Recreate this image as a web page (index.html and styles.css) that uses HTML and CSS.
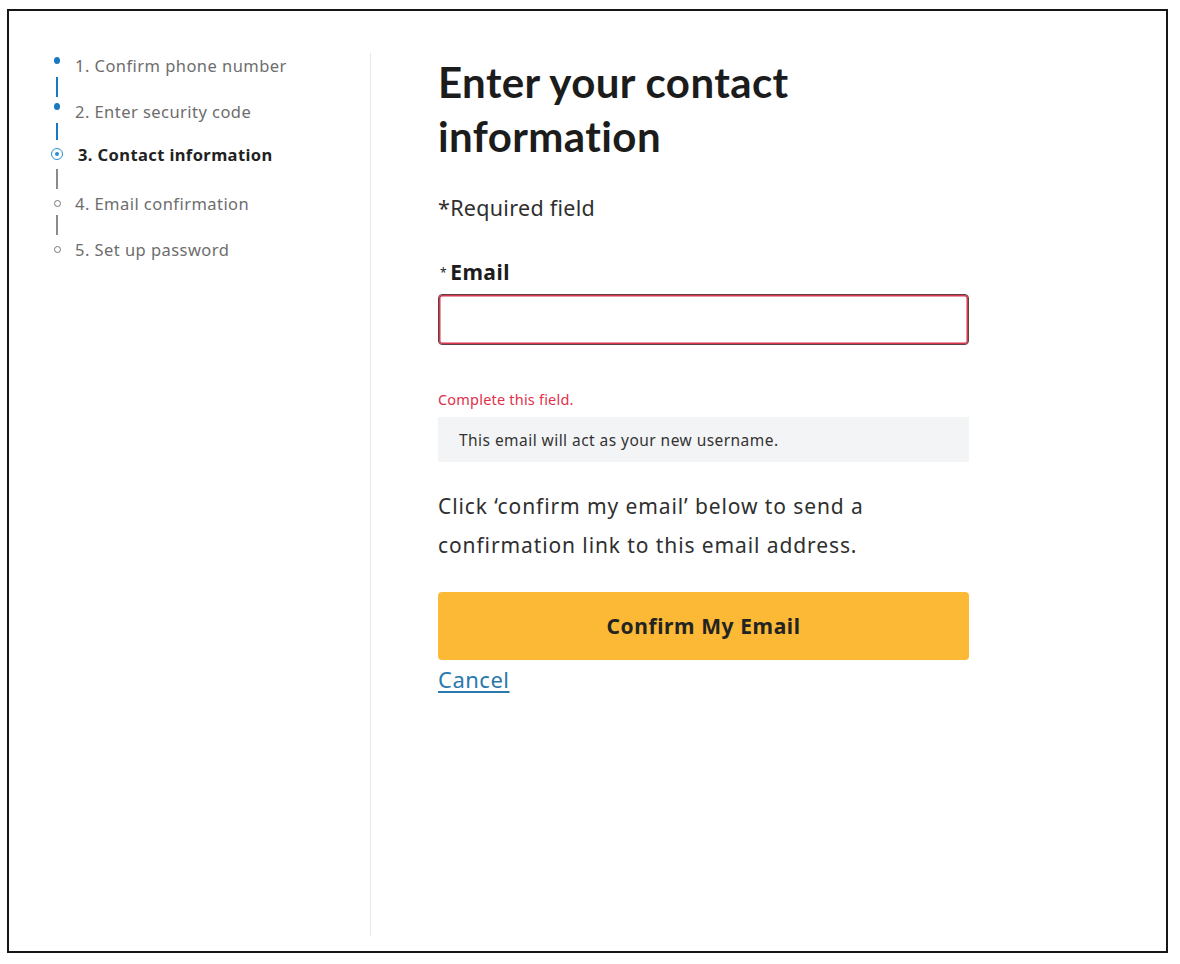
FILE: index.html
```html
<!DOCTYPE html>
<html lang="en">
<head>
<meta charset="utf-8">
<title>Enter your contact information</title>
<link rel="stylesheet" href="styles.css">
</head>
<body>
<div class="frame">
  <aside class="sidebar">
    <div class="steps">
      <div class="step done"><span class="marker"><span class="dot"></span></span><span class="label">1. Confirm phone number</span></div>
      <div class="conn done"><span class="line"></span></div>
      <div class="step done"><span class="marker"><span class="dot"></span></span><span class="label">2. Enter security code</span></div>
      <div class="conn done short"><span class="line"></span></div>
      <div class="step current"><span class="marker"><span class="ring"></span></span><span class="label">3. Contact information</span></div>
      <div class="conn long"><span class="line"></span></div>
      <div class="step todo"><span class="marker"><span class="hollow"></span></span><span class="label">4. Email confirmation</span></div>
      <div class="conn"><span class="line"></span></div>
      <div class="step todo"><span class="marker"><span class="hollow"></span></span><span class="label">5. Set up password</span></div>
    </div>
  </aside>
  <main class="content">
    <h1 class="title">Enter your contact information</h1>
    <p class="required-note">*Required field</p>
    <label class="field-label" for="email"><span class="ast">*</span>Email</label>
    <input class="field-input" id="email" type="email">
    <p class="error">Complete this field.</p>
    <div class="hint">This email will act as your new username.</div>
    <p class="instructions">Click ‘confirm my email’ below to send a confirmation link to this email address.</p>
    <button class="primary-btn" type="button">Confirm My Email</button>
    <a class="cancel" href="#">Cancel</a>
  </main>
</div>
</body>
</html>
```
FILE: styles.css
```css
* { box-sizing: border-box; }
html, body { margin: 0; padding: 0; background: #fff; }
body {
  padding: 9px 12px 11px 7px;
  font-family: "Noto Sans", Lato, sans-serif;
  color: #2b2b2b;
}
.frame {
  display: flex;
  height: 944px;
  border: 2px solid #161616;
  background: #fff;
}
.sidebar {
  width: 362px;
  margin: 42px 0 15px 0;
  border-right: 1px solid #e7e7e7;
}
.steps {
  display: flex;
  flex-direction: column;
  padding: 1px 0 0 42px;
}
.step {
  display: flex;
  align-items: center;
  height: 22px;
  font-size: 16.5px;
  letter-spacing: 0.45px;
  color: #6d6d6d;
}
.marker {
  width: 12px;
  height: 22px;
  display: flex;
  align-items: center;
  justify-content: center;
  margin-right: 12px;
  flex: 0 0 auto;
}
.step.done .marker { align-items: flex-start; padding-top: 3px; }
.dot {
  width: 6px; height: 7px;
  border-radius: 50%;
  background: #1a78bf;
}
.ring {
  width: 12px; height: 12px;
  border-radius: 50%;
  border: 1.5px solid #2b8fd3;
  display: flex; align-items: center; justify-content: center;
}
.ring::after {
  content: "";
  width: 4px; height: 4px; border-radius: 50%;
  background: #2b8fd3;
}
.hollow {
  width: 7px; height: 7px;
  border-radius: 50%;
  border: 1.3px solid #777;
}
.step.current .label { font-weight: 700; color: #222; margin-left: 3px; letter-spacing: 0.4px; }
.conn {
  height: 24px;
  width: 12px;
  display: flex;
  justify-content: center;
  padding: 1px 0 3px;
}
.conn.short { height: 21px; }
.conn.long { height: 27px; padding-top: 4px; }
.conn .line { width: 1.5px; background: #8a8a8a; }
.conn.done .line { background: #1a78bf; }
.content {
  flex: 0 0 auto;
  width: 598px;
  padding: 44px 0 0 67px;
  display: flex;
  flex-direction: column;
  align-items: flex-start;
}
.title {
  margin: 0;
  font-family: Lato, sans-serif;
  font-weight: 700;
  font-size: 42px;
  letter-spacing: 0.4px;
  line-height: 54px;
  color: #1c1c1c;
  width: 420px;
}
.required-note {
  margin: 30px 0 0;
  font-size: 21.5px;
  letter-spacing: 0.3px;
  line-height: 30px;
  color: #2f2f2f;
}
.field-label {
  margin-top: 36px;
  font-size: 21px;
  letter-spacing: 0.5px;
  line-height: 26px;
  font-weight: 700;
  color: #1c1c1c;
  display: flex;
  align-items: baseline;
}
.ast { font-size: 12px; font-weight: 400; margin: 0 3px 0 2px; position: relative; top: -3px; }
.field-input {
  margin-top: 5px;
  width: 531px;
  height: 51px;
  border: 1px solid #5b4346;
  box-shadow: inset 0 0 0 1.5px #d9354d;
  border-radius: 4px;
  background: #fff;
  font: inherit;
  padding: 0 12px;
  outline: none;
}
.error {
  margin: 45px 0 0;
  font-size: 14.5px;
  letter-spacing: 0.2px;
  line-height: 18px;
  color: #e2304a;
}
.hint {
  margin-top: 9px;
  width: 531px;
  height: 45px;
  background: #f3f4f6;
  padding: 0 21px;
  display: flex;
  align-items: center;
  font-size: 15.5px;
  letter-spacing: 0.45px;
  color: #333;
}
.instructions {
  margin: 25px 0 0;
  max-width: 480px;
  font-size: 21px;
  letter-spacing: 0.9px;
  line-height: 39px;
  color: #2f2f2f;
}
.primary-btn {
  margin-top: 27px;
  width: 531px;
  height: 68px;
  border: none;
  border-radius: 4px;
  background: #fbb936;
  font-family: "Noto Sans", sans-serif;
  font-size: 21px;
  letter-spacing: 0.6px;
  font-weight: 700;
  color: #232323;
  cursor: pointer;
}
.cancel {
  margin-top: 4px;
  font-size: 22px;
  letter-spacing: 0.5px;
  line-height: 30px;
  color: #2a79ad;
  text-decoration: underline;
  text-underline-offset: 3px;
}
```
